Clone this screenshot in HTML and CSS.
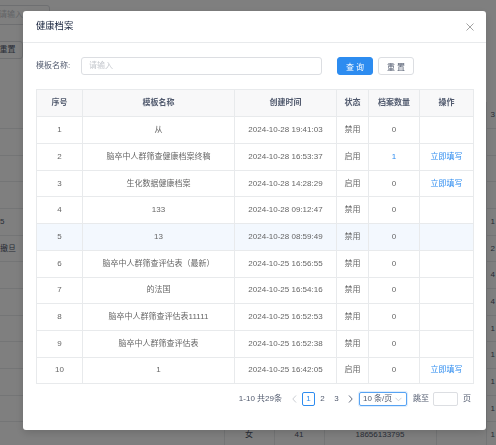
FILE: index.html
```html
<!DOCTYPE html>
<html lang="zh-CN">
<head>
    <meta charset="UTF-8">
    <meta name="viewport" content="width=device-width, initial-scale=1.0">
    <title>健康档案</title>
    <link rel="stylesheet" href="styles.css">
</head>
<body>
    <!-- 背景页面 -->
    <div class="page">
        <div class="page-search">
            <div class="page-input">请输入</div>
            <div class="page-btn">重置</div>
        </div>
        <table class="bg-table">
            <colgroup>
                <col class="bc-1"><col class="bc-2"><col class="bc-3"><col class="bc-4"><col class="bc-5"><col class="bc-6">
            </colgroup>
            <tr><td></td><td></td><td></td><td></td><td></td><td>3</td></tr>
            <tr><td></td><td></td><td></td><td></td><td></td><td></td></tr>
            <tr><td></td><td></td><td></td><td></td><td></td><td></td></tr>
            <tr><td></td><td></td><td></td><td></td><td></td><td></td></tr>
            <tr><td>5</td><td></td><td></td><td></td><td></td><td>1</td></tr>
            <tr><td>撤旦</td><td></td><td></td><td></td><td></td><td>2</td></tr>
            <tr><td></td><td></td><td></td><td></td><td></td><td>4</td></tr>
            <tr><td></td><td></td><td></td><td></td><td></td><td>4</td></tr>
            <tr><td></td><td></td><td></td><td></td><td></td><td>1</td></tr>
            <tr><td></td><td></td><td></td><td></td><td></td><td>1</td></tr>
            <tr><td></td><td></td><td></td><td></td><td></td><td>1</td></tr>
            <tr><td></td><td></td><td></td><td></td><td></td><td>1</td></tr>
            <tr><td></td><td>女</td><td>41</td><td>18656133795</td><td></td><td>1</td></tr>
        </table>
    </div>

    <!-- 弹窗 -->
    <div class="mask">
        <div class="modal">
            <div class="modal-header">
                <span class="modal-title">健康档案</span>
                <svg class="modal-close" width="8" height="8" viewBox="0 0 8 8">
                    <path d="M0.5 0.5 L7.5 7.5 M7.5 0.5 L0.5 7.5" stroke="#999" stroke-width="0.9" fill="none"/>
                </svg>
            </div>
            <div class="modal-body">
                <div class="search-bar">
                    <label class="search-label">模板名称:</label>
                    <div class="search-input">请输入</div>
                    <button class="btn btn-primary">查询</button>
                    <button class="btn">重置</button>
                </div>

                <table class="grid">
                    <colgroup>
                        <col class="col-no"><col class="col-name"><col class="col-time"><col class="col-state"><col class="col-count"><col class="col-op">
                    </colgroup>
                    <thead>
                        <tr><th>序号</th><th>模板名称</th><th>创建时间</th><th>状态</th><th>档案数量</th><th>操作</th></tr>
                    </thead>
                    <tbody>
                        <tr><td>1</td><td>从</td><td>2024-10-28 19:41:03</td><td>禁用</td><td>0</td><td></td></tr>
                        <tr><td>2</td><td>脑卒中人群筛查健康档案终稿</td><td>2024-10-28 16:53:37</td><td>启用</td><td><a class="link">1</a></td><td><a class="link">立即填写</a></td></tr>
                        <tr><td>3</td><td>生化数据健康档案</td><td>2024-10-28 14:28:29</td><td>启用</td><td>0</td><td><a class="link">立即填写</a></td></tr>
                        <tr><td>4</td><td>133</td><td>2024-10-28 09:12:47</td><td>禁用</td><td>0</td><td></td></tr>
                        <tr class="hover"><td>5</td><td>13</td><td>2024-10-28 08:59:49</td><td>禁用</td><td>0</td><td></td></tr>
                        <tr><td>6</td><td>脑卒中人群筛查评估表（最新）</td><td>2024-10-25 16:56:55</td><td>禁用</td><td>0</td><td></td></tr>
                        <tr><td>7</td><td>的法国</td><td>2024-10-25 16:54:16</td><td>禁用</td><td>0</td><td></td></tr>
                        <tr><td>8</td><td>脑卒中人群筛查评估表11111</td><td>2024-10-25 16:52:53</td><td>禁用</td><td>0</td><td></td></tr>
                        <tr><td>9</td><td>脑卒中人群筛查评估表</td><td>2024-10-25 16:52:38</td><td>禁用</td><td>0</td><td></td></tr>
                        <tr><td>10</td><td>1</td><td>2024-10-25 16:42:05</td><td>启用</td><td>0</td><td><a class="link">立即填写</a></td></tr>
                    </tbody>
                </table>

                <div class="pager">
                    <span class="pager-total">1-10 共29条</span>
                    <span class="pager-item is-disabled">
                        <svg width="5" height="8" viewBox="0 0 5 8"><polyline points="4,0.5 0.8,4 4,7.5" fill="none" stroke="currentColor" stroke-width="0.9"/></svg>
                    </span>
                    <span class="pager-item is-active">1</span>
                    <span class="pager-item">2</span>
                    <span class="pager-item">3</span>
                    <span class="pager-item">
                        <svg width="5" height="8" viewBox="0 0 5 8"><polyline points="1,0.5 4.2,4 1,7.5" fill="none" stroke="currentColor" stroke-width="0.9"/></svg>
                    </span>
                    <div class="pager-size">
                        <span>10 条/页</span>
                        <svg width="7" height="5" viewBox="0 0 7 5"><polyline points="0.5,0.8 3.5,3.8 6.5,0.8" fill="none" stroke="#c5c8ce" stroke-width="0.8"/></svg>
                    </div>
                    <span class="pager-jump">跳至</span>
                    <div class="pager-input"></div>
                    <span class="pager-unit">页</span>
                </div>
            </div>
        </div>
    </div>
</body>
</html>
```

FILE: styles.css
```css
* {
    margin: 0;
    padding: 0;
    box-sizing: border-box;
}

html, body {
    height: 100%;
    overflow: hidden;
}

body {
    font-family: "Liberation Sans", "Noto Sans CJK SC", sans-serif;
    font-size: 8px;
    line-height: 1.25;
    color: #515a6e;
    background: #fff;
}

/* 背景页面 */
.page {
    width: 100%;
    height: 100%;
    overflow: hidden;
}

.page-search {
    display: flex;
    flex-direction: column;
    padding-top: 5px;
    gap: 16px;
}

.page-input {
    width: 60px;
    height: 20px;
    margin-left: -10px;
    padding-left: 8px;
    line-height: 18px;
    color: #c5c8ce;
    border: 1px solid #dcdee2;
    border-radius: 3px;
}

.page-btn {
    width: 31px;
    height: 18px;
    margin-left: -8px;
    line-height: 16px;
    text-align: center;
    border: 1px solid #dcdee2;
    border-radius: 3px;
}

.bg-table {
    margin-top: 43px;
    border-collapse: collapse;
    table-layout: fixed;
    width: 560px;
}

.bg-table td {
    height: 26.67px;
    border-bottom: 1px solid #e8eaec;
    border-right: 1px solid #e8eaec;
    text-align: center;
    color: #515a6e;
    white-space: nowrap;
    overflow: hidden;
}

.bg-table td:first-child {
    text-align: left;
}

.bg-table td:last-child {
    text-align: left;
    padding-left: 4px;
}

.bc-1 { width: 224px; }
.bc-2 { width: 50px; }
.bc-3 { width: 50px; }
.bc-4 { width: 112px; }
.bc-5 { width: 50px; }
.bc-6 { width: 74px; }

/* 遮罩和弹窗 */
.mask {
    position: fixed;
    inset: 0;
    background: rgba(0, 0, 0, 0.5);
    padding: 11px 0 0 23px;
}

.modal {
    width: 463px;
    height: 419px;
    background: #fff;
    border-radius: 3px;
    box-shadow: 0 3px 8px rgba(0, 0, 0, 0.15);
}

.modal-header {
    height: 32px;
    display: flex;
    align-items: center;
    justify-content: space-between;
    padding: 0 12px 0 13px;
    border-bottom: 1px solid #e8eaec;
}

.modal-title {
    font-size: 9.3px;
    color: #17233d;
}

.modal-close {
    display: block;
    margin-top: 1px;
}

.modal-body {
    padding: 14px 13px 0;
}

.search-bar {
    display: flex;
    align-items: center;
    height: 18px;
}

.search-label {
    width: 45px;
    color: #515a6e;
}

.search-input {
    width: 241px;
    height: 18px;
    padding-left: 7px;
    line-height: 16px;
    color: #c5c8ce;
    border: 1px solid #dcdee2;
    border-radius: 3px;
}

.btn {
    width: 36px;
    height: 18px;
    margin-left: 5px;
    font-family: inherit;
    font-size: 8px;
    letter-spacing: 2px;
    text-indent: 2px;
    color: #515a6e;
    background: #fff;
    border: 1px solid #dcdee2;
    border-radius: 3px;
}

.btn-primary {
    margin-left: 15px;
    color: #fff;
    background: #2d8cf0;
    border-color: #2d8cf0;
}

/* 表格 */
.grid {
    width: 100%;
    margin-top: 14px;
    border-collapse: collapse;
    table-layout: fixed;
    border: 1px solid #e8eaec;
}

.col-no { width: 46px; }
.col-name { width: 152px; }
.col-time { width: 102px; }
.col-state { width: 32px; }
.col-count { width: 51px; }
.col-op { width: 54px; }

.grid th,
.grid td {
    text-align: center;
    white-space: nowrap;
    overflow: hidden;
    border-right: 1px solid #e8eaec;
    border-bottom: 1px solid #e8eaec;
}

.grid th {
    height: 27.4px;
    font-weight: bold;
    color: #515a6e;
    background: #f8f8f9;
}

.grid td {
    height: 26.7px;
    color: #666;
}

.grid tr.hover td {
    background: #f3f8fe;
}

.link {
    color: #2d8cf0;
    cursor: pointer;
}

/* 分页 */
.pager {
    display: flex;
    align-items: center;
    justify-content: flex-end;
    margin-top: 8px;
    height: 14px;
    padding-right: 2px;
}

.pager-total {
    margin-right: 6px;
}

.pager-item {
    width: 13px;
    height: 14px;
    margin-right: 1px;
    display: flex;
    align-items: center;
    justify-content: center;
    color: #515a6e;
    border: 1px solid transparent;
    border-radius: 2px;
}

.pager-item.is-active {
    color: #2d8cf0;
    border-color: #2d8cf0;
}

.pager-item.is-disabled {
    color: #c5c8ce;
}

.pager-size {
    width: 48px;
    height: 14px;
    margin-left: 1px;
    padding: 0 4px 0 3px;
    display: flex;
    align-items: center;
    justify-content: space-between;
    border: 1px solid #57a3f3;
    border-radius: 2px;
    box-shadow: 0 0 0 1px rgba(45, 140, 240, 0.15);
}

.pager-jump {
    margin-left: 6px;
}

.pager-input {
    width: 25px;
    height: 14px;
    margin-left: 4px;
    border: 1px solid #dcdee2;
    border-radius: 2px;
}

.pager-unit {
    margin-left: 5px;
}
```
